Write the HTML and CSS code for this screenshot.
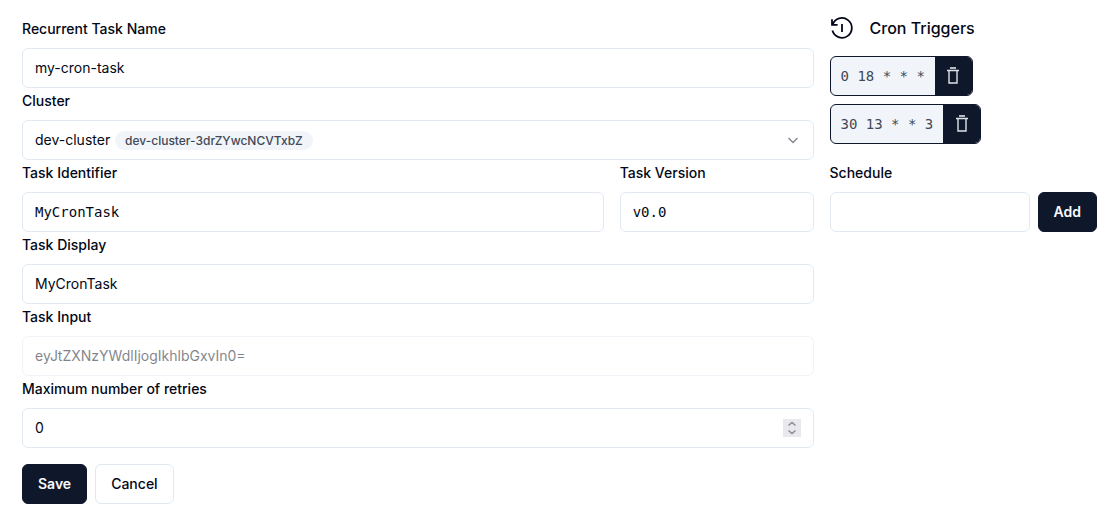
FILE: index.html
```html
<!DOCTYPE html>
<html lang="en">
<head>
<meta charset="utf-8">
<meta name="viewport" content="width=device-width, initial-scale=1">
<title>Recurrent Task</title>
<link rel="stylesheet" href="styles.css">
</head>
<body>
<main class="page">
  <form class="task-form" id="task-form">
    <div class="field">
      <label class="label" for="name">Recurrent Task Name</label>
      <input class="control" id="name" type="text" value="my-cron-task">
    </div>
    <div class="field">
      <label class="label" for="cluster">Cluster</label>
      <div class="control-wrap">
        <select class="control select" id="cluster"><option>dev-cluster</option></select>
        <span class="badge">dev-cluster-3drZYwcNCVTxbZ</span>
        <svg class="chevron" viewBox="0 0 16 16" aria-hidden="true"><path d="M3.5 6 8 10.5 12.5 6"/></svg>
      </div>
    </div>
    <div class="field-row">
      <div class="field">
        <label class="label" for="identifier">Task Identifier</label>
        <input class="control mono" id="identifier" type="text" value="MyCronTask">
      </div>
      <div class="field">
        <label class="label" for="version">Task Version</label>
        <input class="control mono" id="version" type="text" value="v0.0">
      </div>
    </div>
    <div class="field">
      <label class="label" for="display">Task Display</label>
      <input class="control" id="display" type="text" value="MyCronTask">
    </div>
    <div class="field">
      <label class="label" for="input">Task Input</label>
      <input class="control" id="input" type="text" value="eyJtZXNzYWdlIjogIkhlbGxvIn0=" disabled>
    </div>
    <div class="field">
      <label class="label" for="retries">Maximum number of retries</label>
      <div class="control-wrap">
        <input class="control number" id="retries" type="number" value="0">
        <svg class="stepper" viewBox="0 0 18 18" aria-hidden="true"><path d="M5.5 6.5 9 3.5l3.5 3M5.5 11.5l3.5 3 3.5-3"/></svg>
      </div>
    </div>
    <div class="actions">
      <button class="button primary" type="submit">Save</button>
      <button class="button outline" type="button">Cancel</button>
    </div>
  </form>

  <section class="triggers">
    <h2 class="title">
      <svg class="history" viewBox="0 0 24 24" aria-hidden="true"><path d="M2 3.2v5.6h5.6M2.6 8.6A9.9 9.9 0 1 1 2.4 14.6M12 8v8"/></svg>
      Cron Triggers
    </h2>
    <ul class="trigger-list">
      <li class="trigger">
        <code class="mono">0 18 * * *</code>
        <button class="remove" type="button" aria-label="Remove 0 18 * * *"><svg class="trash" viewBox="0 0 16 18" aria-hidden="true"><path class="trash-handle" d="M5 1h6"/><path d="M2 3.5h12M4 3.5V16h8V3.5"/></svg></button>
      </li>
      <li class="trigger">
        <code class="mono">30 13 * * 3</code>
        <button class="remove" type="button" aria-label="Remove 30 13 * * 3"><svg class="trash" viewBox="0 0 16 18" aria-hidden="true"><path class="trash-handle" d="M5 1h6"/><path d="M2 3.5h12M4 3.5V16h8V3.5"/></svg></button>
      </li>
    </ul>
    <form class="schedule">
      <div class="field">
        <label class="label" for="schedule">Schedule</label>
        <input class="control" id="schedule" type="text">
      </div>
      <button class="button primary" type="submit">Add</button>
    </form>
  </section>
</main>
</body>
</html>
```

FILE: styles.css
```css
* { box-sizing: border-box; }

body {
  margin: 0;
  background: #fff;
  color: #020817;
  font: 14px/20px Inter, sans-serif;
}

.page {
  display: grid;
  grid-template-columns: minmax(0, 1fr) auto;
  align-items: start;
  gap: 16px;
  padding: 16px 22px;
}

.label {
  display: block;
  padding-bottom: 6px;
  font-weight: 500;
  line-height: 26px;
}

.control {
  display: block;
  width: 100%;
  height: 40px;
  padding: 0 12px 1px;
  border: 1px solid #e2e8f0;
  border-radius: 6px;
  background: #fff;
  color: inherit;
  font: inherit;
}

.control:disabled { opacity: 0.5; }

.control.mono,
.mono { font-family: "DejaVu Sans Mono", monospace; }

.control-wrap { position: relative; }
.select { appearance: none; }

.badge {
  position: absolute;
  top: 11px;
  left: 93px;
  padding: 0 10px;
  border-radius: 10px;
  background: #f1f5f9;
  color: #414858;
  font-size: 12px;
  font-weight: 500;
  line-height: 19px;
  pointer-events: none;
}

.chevron,
.stepper {
  position: absolute;
  fill: none;
  stroke: #808490;
  pointer-events: none;
}

.chevron {
  top: 12px;
  right: 13px;
  width: 16px;
  height: 16px;
  stroke-width: 1.3;
}

.number { appearance: textfield; }
.number::-webkit-inner-spin-button { appearance: none; margin: 0; }

.stepper {
  top: 11px;
  right: 13px;
  width: 18px;
  height: 18px;
  background: #e9e9ed;
  stroke: #8b8b95;
  stroke-width: 1.5;
}

.field-row {
  display: grid;
  grid-template-columns: 3fr 1fr;
  gap: 16px;
}

.actions {
  display: flex;
  gap: 8px;
  padding-top: 16px;
}

.button {
  height: 40px;
  padding: 0 15px;
  border: 1px solid #0f172a;
  border-radius: 6px;
  font: inherit;
  font-weight: 500;
}

.primary {
  background: #0f172a;
  color: #f8fafc;
  font-weight: 600;
}

.outline {
  border-color: #e2e8f0;
  background: #fff;
  color: inherit;
}

.title {
  display: flex;
  align-items: center;
  gap: 16px;
  margin: 0 0 16px;
  font-size: 16px;
  font-weight: 500;
  line-height: 24px;
}

.history {
  width: 24px;
  height: 24px;
  fill: none;
  stroke: currentColor;
  stroke-width: 1.8;
}

.trigger-list {
  display: flex;
  flex-direction: column;
  align-items: flex-start;
  gap: 8px;
  margin: 0 0 16px;
  padding: 0;
  list-style: none;
}

.trigger {
  display: flex;
  align-items: center;
  height: 40px;
  overflow: hidden;
  border: 1px solid #0f172a;
  border-radius: 6px;
  background: #f1f5f9;
}

.trigger code {
  padding: 0 10px;
  color: #414858;
}

.remove {
  display: grid;
  place-items: center;
  align-self: stretch;
  width: 37px;
  padding: 0;
  border: 0;
  background: #0f172a;
}

.trash {
  width: 16px;
  height: 18px;
  fill: none;
  stroke: #dfe3e9;
  stroke-width: 1.4;
}

.trash-handle {
  stroke: #b7bbc3;
  stroke-width: 2;
}

.schedule {
  display: grid;
  grid-template-columns: 200px auto;
  align-items: end;
  gap: 8px;
}
```
